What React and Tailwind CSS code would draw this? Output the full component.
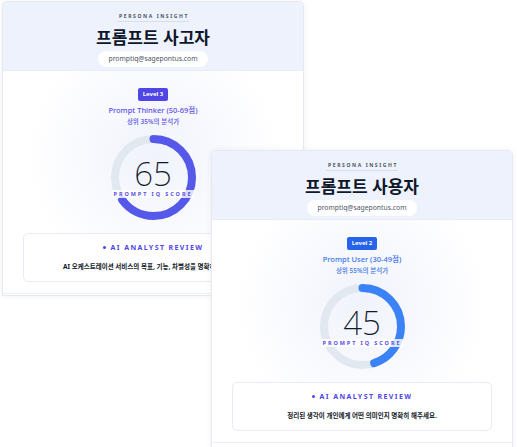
import React from 'react';

const FONT = { fontFamily: '"Noto Sans", "Noto Sans CJK KR", sans-serif' };

const personas = [
  {
    title: '프롬프트 사고자',
    level: 'Level 3',
    name: 'Prompt Thinker (50-69점)',
    rank: '상위 35%의 분석가',
    score: 65,
    color: '#5558e8',
    badge: 'bg-[#4f46e5]',
    text: 'text-[#5b50e6]',
    review: 'AI 오케스트레이션 서비스의 목표, 기능, 차별성을 명확히 해주세요.',
    pos: 'left-[2px] top-[1px] h-[295px]',
  },
  {
    title: '프롬프트 사용자',
    level: 'Level 2',
    name: 'Prompt User (30-49점)',
    rank: '상위 55%의 분석가',
    score: 45,
    color: '#3b82f6',
    badge: 'bg-[#2563eb]',
    text: 'text-[#3b73e6]',
    review: '정리된 생각이 개인에게 어떤 의미인지 명확히 해주세요.',
    pos: 'left-[211px] top-[150px] h-[310px]',
  },
];

function ScoreRing({ score, color }) {
  const r = 38.5;
  const c = 2 * Math.PI * r;
  return (
    <div className="relative w-[85px] h-[85px]">
      <svg width="85" height="85" viewBox="0 0 85 85" className="-rotate-90">
        <circle cx="42.5" cy="42.5" r={r} fill="none" stroke="#e2e8f0" strokeWidth="8" />
        <circle
          cx="42.5"
          cy="42.5"
          r={r}
          fill="none"
          stroke={color}
          strokeWidth="8"
          strokeLinecap="round"
          strokeDasharray={`${(c * score) / 100} ${c}`}
        />
      </svg>
      <div className="absolute inset-x-0 top-[22px] text-center text-[33px] leading-[33px] font-extralight text-[#111827]">
        {score}
      </div>
      <div className="absolute inset-x-0 top-[55px] flex justify-center">
        <span className="bg-white/80 px-[2px] text-[5.5px] leading-[8px] font-bold tracking-[0.35em] text-[#5b50e6]">
          PROMPT IQ SCORE
        </span>
      </div>
    </div>
  );
}

function PersonaCard({ p }) {
  return (
    <div
      className={`absolute ${p.pos} w-[302px] overflow-hidden rounded-t-[5px] border border-[#e6e9f0] bg-white shadow-[0_0_6px_rgba(15,23,42,0.06)]`}
    >
      <div className="h-[69px] bg-[#eef2fd] flex flex-col items-center pt-[10px] border-b border-[#e8ecf5]">
        <div className="text-[5px] leading-[9px] font-bold tracking-[0.32em] text-[#4b5563] border-b border-[#d8deea] pl-[2px]">
          PERSONA INSIGHT
        </div>
        <div className="mt-[4px] text-[17px] leading-[24px] font-bold text-[#0f172a]">{p.title}</div>
        <div className="mt-[1px] h-[16px] px-[10px] rounded-full bg-white flex items-center text-[6.8px] text-[#4b5563]">
          promptiq@sagepontus.com
        </div>
      </div>
      <div className="h-[223px] flex flex-col items-center pt-[17px] bg-[radial-gradient(circle_at_50%_38%,#f0f3fc,#ffffff_62%)] border-b border-[#edf0f5]">
        <div className={`${p.badge} h-[13px] px-[5px] rounded-[2px] flex items-center text-[6px] font-bold text-white`}>
          {p.level}
        </div>
        <div className={`mt-[4px] text-[7.5px] leading-[11px] font-medium ${p.text}`}>{p.name}</div>
        <div className={`text-[6.5px] leading-[11px] font-medium ${p.text}`}>{p.rank}</div>
        <div className="mt-[8px]">
          <ScoreRing score={p.score} color={p.color} />
        </div>
        <div className="mt-[13px] w-[260px] h-[49px] rounded-[5px] border border-[#e8ebf1] bg-white flex flex-col items-center">
          <div className="mt-[9px] flex items-center gap-[5px] text-[7px] leading-[9px] font-bold tracking-[0.2em] text-[#4f46e5]">
            <span className="w-[3px] h-[3px] rounded-full bg-[#4f46e5]" />
            AI ANALYST REVIEW
          </div>
          <div className="mt-[10px] whitespace-nowrap text-[6.5px] leading-[9px] font-bold text-[#111827]">
            {p.review}
          </div>
        </div>
      </div>
    </div>
  );
}

export default function App() {
  return (
    <div className="relative w-[517px] h-[447px] bg-white overflow-hidden" style={FONT}>
      {personas.map((p) => (
        <PersonaCard key={p.title} p={p} />
      ))}
    </div>
  );
}
